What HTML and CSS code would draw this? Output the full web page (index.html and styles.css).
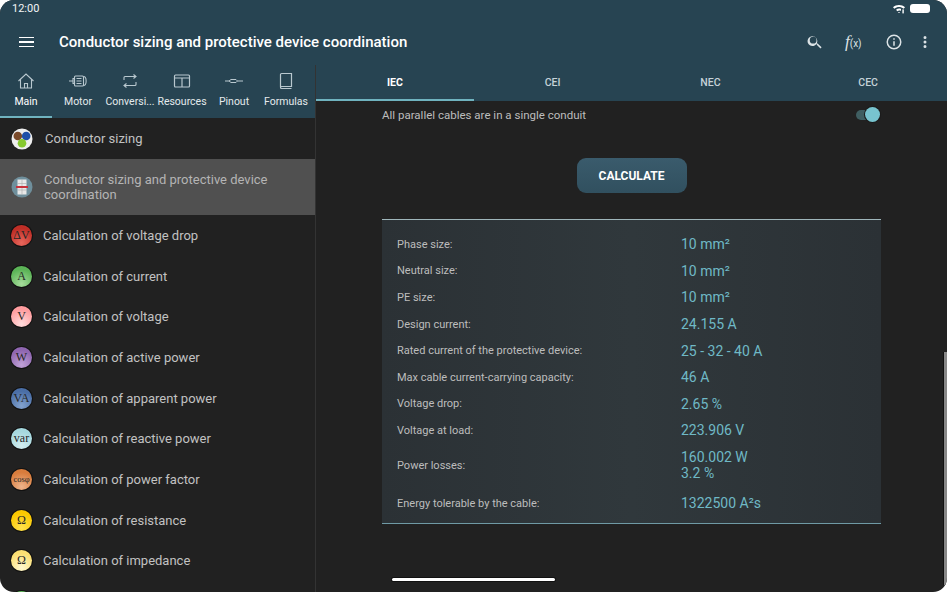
FILE: index.html
```html
<!DOCTYPE html>
<html lang="en">
<head>
    <meta charset="UTF-8">
    <meta name="viewport" content="width=device-width, initial-scale=1.0">
    <title>Conductor sizing and protective device coordination</title>
    <link rel="stylesheet" href="styles.css">
</head>
<body>
    <div class="screen">
        <header class="appbar">
            <div class="status-bar">
                <span class="clock">12:00</span>
                <div class="status-icons">
                    <svg class="wifi" width="12" height="10" viewBox="0 0 12 10"><path d="M0 3.2C3.2 .2 8.8 .2 12 3.2L10.6 4.8C8 2.4 4 2.4 1.4 4.8z" fill="#fff"/><path d="M3 5.8C4.6 4.4 6.6 4.2 8 4.9V6.9C6.8 6.3 5.4 6.5 4.4 7.2z" fill="#fff"/><path d="M5 8 6 9.2 7 8z" fill="#fff"/><rect x="9.4" y="5.4" width="1.4" height="4" fill="#fff"/></svg>
                    <div class="battery"></div>
                </div>
            </div>
            <div class="toolbar">
                <div class="hamburger"><span></span><span></span><span></span></div>
                <h1>Conductor sizing and protective device coordination</h1>
                <div class="actions">
                    <svg class="act-search" width="18" height="18" viewBox="0 0 24 24"><path d="M15.5 14h-.8l-.3-.3A6.5 6.5 0 1 0 14 14.400l.3.3v.8l5 5 1.500-1.500zm-6 0a4.500 4.500 0 1 1 0-9 4.500 4.500 0 0 1 0 9z" fill="#dce3e6"/></svg>
                    <div class="act-fx"><i>f</i><span>(x)</span></div>
                    <svg class="act-info" width="18" height="18" viewBox="0 0 24 24"><path d="M11 7h2v2h-2zm0 4h2v6h-2zm1-9a10 10 0 1 0 0 20 10 10 0 0 0 0-20zm0 18a8 8 0 1 1 0-16 8 8 0 0 1 0 16z" fill="#dce3e6"/></svg>
                    <svg class="act-more" width="18" height="18" viewBox="0 0 24 24"><path d="M12 8a2 2 0 1 0 0-4 2 2 0 0 0 0 4zm0 2a2 2 0 1 0 0 4 2 2 0 0 0 0-4zm0 6a2 2 0 1 0 0 4 2 2 0 0 0 0-4z" fill="#dce3e6"/></svg>
                </div>
            </div>
        </header>

        <div class="main">
            <aside class="sidebar">
                <nav class="side-tabs">
                    <div class="side-tab active">
                        <svg width="18" height="18" viewBox="0 0 18 18" fill="none" stroke="#b9c8cf" stroke-width="1.100"><path d="M1.500 9 9 2l7.500 7M3.500 7.500V16h11V7.500M7.500 16v-4.500h3V16"/></svg>
                        <span>Main</span>
                    </div>
                    <div class="side-tab">
                        <svg width="20" height="18" viewBox="0 0 20 18" fill="none" stroke="#b9c8cf" stroke-width="1.100"><path d="M1 9h4M5 6.500h1.500v5H5z"/><rect x="6.500" y="4" width="9" height="10" rx="1"/><path d="M8.500 6.500h5M8.500 9h5M8.500 11.500h5"/><path d="M15.500 4.500c3.500 0 3.500 9 0 9"/></svg>
                        <span>Motor</span>
                    </div>
                    <div class="side-tab">
                        <svg width="18" height="18" viewBox="0 0 18 18" fill="none" stroke="#b9c8cf" stroke-width="1.100"><path d="M3 8V5.500C3 5 3.500 4.500 4 4.500h10.500M12.500 2.500l2.500 2-2.500 2M15 10v2.500c0 .5-.5 1-1 1H3.500M5.500 11.500l-2.500 2 2.500 2"/></svg>
                        <span>Conversi...</span>
                    </div>
                    <div class="side-tab">
                        <svg width="18" height="18" viewBox="0 0 18 18" fill="none" stroke="#b9c8cf" stroke-width="1.200"><rect x="1.500" y="3" width="15" height="12" rx="1"/><path d="M1.500 6h15M9 6v9"/></svg>
                        <span>Resources</span>
                    </div>
                    <div class="side-tab">
                        <svg width="20" height="18" viewBox="0 0 20 18" fill="none" stroke="#b9c8cf" stroke-width="1"><path d="M1 9h4l2-1.500h5l1.500 1.500-1.500 1.500H7L5 9M13.500 9H19"/></svg>
                        <span>Pinout</span>
                    </div>
                    <div class="side-tab">
                        <svg width="18" height="18" viewBox="0 0 18 18" fill="none" stroke="#b9c8cf" stroke-width="1.200"><path d="M3.500 15V2.500C3.500 2 4 1.500 4.500 1.500h10v13h-10c-.6 0-1 .4-1 1s.4 1 1 1h10"/></svg>
                        <span>Formulas</span>
                    </div>
                </nav>

                <ul class="calc-list">
                    <li class="calc-item">
                        <svg class="calc-svg" width="22" height="22" viewBox="0 0 22 22"><circle cx="11" cy="11" r="10.500" fill="#eee"/><circle cx="6.800" cy="8" r="4.300" fill="#7a4a2a"/><circle cx="15.200" cy="8" r="4.300" fill="#1f4fa8"/><circle cx="11" cy="15.200" r="4.300" fill="#86c92e"/></svg>
                        <span>Conductor sizing</span>
                    </li>
                    <li class="calc-item selected">
                        <svg class="calc-svg" width="22" height="22" viewBox="0 0 22 22"><circle cx="11" cy="11" r="10.500" fill="#6f8f9c"/><rect x="6.500" y="3.500" width="9" height="15" fill="#e8e8e8"/><path d="M11 3.500v15M6.500 7.500h9M6.500 14h9" stroke="#aaa" stroke-width=".6"/><rect x="5" y="10" width="12" height="2" fill="#c8323c"/></svg>
                        <span>Conductor sizing and protective device coordination</span>
                    </li>
                    <li class="calc-item"><div class="badge red">ΔV</div><span>Calculation of voltage drop</span></li>
                    <li class="calc-item"><div class="badge green">A</div><span>Calculation of current</span></li>
                    <li class="calc-item"><div class="badge pink">V</div><span>Calculation of voltage</span></li>
                    <li class="calc-item"><div class="badge purple">W</div><span>Calculation of active power</span></li>
                    <li class="calc-item"><div class="badge blue">VA</div><span>Calculation of apparent power</span></li>
                    <li class="calc-item"><div class="badge aqua">var</div><span>Calculation of reactive power</span></li>
                    <li class="calc-item"><div class="badge orange tiny">cosφ</div><span>Calculation of power factor</span></li>
                    <li class="calc-item"><div class="badge yellow">Ω</div><span>Calculation of resistance</span></li>
                    <li class="calc-item"><div class="badge cream">Ω</div><span>Calculation of impedance</span></li>
                    <li class="calc-item"><div class="badge green"></div><span></span></li>
                </ul>
            </aside>

            <section class="content">
                <nav class="std-tabs">
                    <div class="std-tab active">IEC</div>
                    <div class="std-tab">CEI</div>
                    <div class="std-tab">NEC</div>
                    <div class="std-tab">CEC</div>
                </nav>

                <div class="form">
                    <div class="switch-row">
                        <span>All parallel cables are in a single conduit</span>
                        <div class="switch"><div class="knob"></div></div>
                    </div>

                    <button class="calc-btn">CALCULATE</button>

                    <div class="results">
                        <div class="result"><span class="label">Phase size:</span><span class="value">10 mm²</span></div>
                        <div class="result"><span class="label">Neutral size:</span><span class="value">10 mm²</span></div>
                        <div class="result"><span class="label">PE size:</span><span class="value">10 mm²</span></div>
                        <div class="result"><span class="label">Design current:</span><span class="value">24.155 A</span></div>
                        <div class="result"><span class="label">Rated current of the protective device:</span><span class="value">25 - 32 - 40 A</span></div>
                        <div class="result"><span class="label">Max cable current-carrying capacity:</span><span class="value">46 A</span></div>
                        <div class="result"><span class="label">Voltage drop:</span><span class="value">2.65 %</span></div>
                        <div class="result"><span class="label">Voltage at load:</span><span class="value">223.906 V</span></div>
                        <div class="result double"><span class="label">Power losses:</span><span class="value">160.002 W<br>3.2 %</span></div>
                        <div class="result"><span class="label">Energy tolerable by the cable:</span><span class="value">1322500 A²s</span></div>
                    </div>
                </div>

                <div class="scrollbar"></div>
            </section>
        </div>

        <div class="home-bar"></div>
    </div>
</body>
</html>
```

FILE: styles.css
```css
html {
    background-color: #fff;
}

body {
    margin: 0;
    font-family: Roboto, "Liberation Sans", sans-serif;
}

.screen {
    position: relative;
    display: flex;
    flex-direction: column;
    height: 100vh;
    background-color: #212121;
    border-radius: 14px;
    overflow: hidden;
}

.appbar {
    background-color: #274452;
    color: #fff;
    height: 65px;
    flex-shrink: 0;
}

.status-bar {
    display: flex;
    align-items: center;
    justify-content: space-between;
    height: 20px;
    padding: 0 17px 3px 12px;
    box-sizing: border-box;
}

.clock {
    font-size: 11px;
    color: #f2f5f6;
}

.status-icons {
    display: flex;
    align-items: center;
    gap: 5px;
}

.battery {
    width: 20px;
    height: 9px;
    background-color: #fff;
    border-radius: 3px;
}

.toolbar {
    display: flex;
    align-items: center;
    height: 44px;
}

.hamburger {
    display: flex;
    flex-direction: column;
    gap: 3px;
    width: 15px;
    margin-left: 19px;
}

.hamburger span {
    height: 1.500px;
    background-color: #fff;
}

.toolbar h1 {
    margin: 0 0 0 25px;
    font-size: 15px;
    font-weight: 500;
    color: #fff;
}

.actions {
    display: flex;
    align-items: center;
    margin-left: auto;
    margin-right: 13px;
}

.act-fx {
    width: 20px;
    margin-left: 21px;
    color: #dce3e6;
    white-space: nowrap;
}

.act-fx i {
    font-family: "Liberation Serif", serif;
    font-size: 17px;
}

.act-fx span {
    font-size: 10px;
}

.act-info {
    margin-left: 20px;
}

.act-more {
    margin-left: 13px;
}

.main {
    display: flex;
    flex: 1;
    min-height: 0;
}

.sidebar {
    width: 315px;
    flex-shrink: 0;
    border-right: 1px solid #333;
    display: flex;
    flex-direction: column;
}

.side-tabs {
    display: flex;
    height: 53px;
    background-color: #274452;
    flex-shrink: 0;
}

.side-tab {
    width: 52px;
    display: flex;
    flex-direction: column;
    align-items: center;
    padding-top: 7px;
    box-sizing: border-box;
    gap: 5px;
    font-size: 10.500px;
    color: #e4eaec;
    white-space: nowrap;
    border-bottom: 2px solid transparent;
}

.side-tab svg {
    display: block;
}

.side-tab.active {
    color: #fff;
    border-bottom-color: #6fb3bf;
}

.calc-list {
    list-style: none;
    margin: 0;
    padding: 0;
    overflow: hidden;
}

.calc-item {
    display: flex;
    align-items: center;
    gap: 11px;
    padding-left: 11px;
    height: 40.700px;
    font-size: 13px;
    line-height: 15px;
    color: #c2c2c2;
}

.calc-item:first-child {
    height: 41px;
    gap: 12px;
}

.calc-item.selected {
    height: 56px;
    background-color: #505050;
    color: #b4b4b4;
}

.calc-svg {
    flex-shrink: 0;
}

.badge {
    width: 21px;
    height: 21px;
    flex-shrink: 0;
    border-radius: 50%;
    display: flex;
    align-items: center;
    justify-content: center;
    overflow: hidden;
    font-family: "Liberation Serif", serif;
    font-size: 12px;
    color: #262626;
    box-shadow: 0 0 0 1px #111;
    white-space: nowrap;
}

.badge.tiny {
    font-size: 8.500px;
}

.red { background: radial-gradient(circle at 50% 85%, #e8675c, #bf2e26 70%); }
.green { background: radial-gradient(circle at 50% 85%, #a7dc9c, #5bb356 70%); }
.pink { background: radial-gradient(circle at 50% 85%, #ffdcdc, #ff9d9f 70%); }
.purple { background: radial-gradient(circle at 50% 85%, #c1a2d8, #8f66b0 70%); }
.blue { background: radial-gradient(circle at 50% 85%, #83a3cf, #4a6ea6 70%); }
.aqua { background: radial-gradient(circle at 50% 85%, #d3edf0, #a5d8de 70%); }
.orange { background: radial-gradient(circle at 50% 85%, #eeb48c, #d87c3c 70%); }
.yellow { background: radial-gradient(circle at 50% 85%, #ffe24d, #fac800 70%); }
.cream { background: radial-gradient(circle at 50% 85%, #fff8d0, #fbdf72 70%); }

.content {
    position: relative;
    flex: 1;
    min-width: 0;
}

.std-tabs {
    display: flex;
    height: 36px;
    background-color: #274452;
}

.std-tab {
    flex: 1;
    display: flex;
    align-items: center;
    justify-content: center;
    padding-bottom: 0;
    font-size: 10.500px;
    font-weight: 500;
    color: #c5d2d8;
    box-sizing: border-box;
    border-bottom: 2px solid transparent;
}

.std-tab.active {
    color: #fff;
    font-weight: 700;
    border-bottom-color: #6fb3bf;
}

.form {
    display: flex;
    flex-direction: column;
    align-items: center;
    padding: 0 66px;
}

.switch-row {
    align-self: stretch;
    display: flex;
    align-items: center;
    justify-content: space-between;
    height: 27px;
    padding-right: 3px;
    font-size: 11.500px;
    color: #bdbdbd;
}

.switch {
    position: relative;
    width: 22px;
    height: 10px;
    border-radius: 5px;
    background-color: #3f5e61;
}

.knob {
    position: absolute;
    top: -3px;
    right: -2px;
    width: 15px;
    height: 15px;
    border-radius: 50%;
    background-color: #78c4cf;
    box-shadow: 0 0 0 1px #1a1a1a;
}

.calc-btn {
    margin-top: 30px;
    width: 110px;
    height: 35px;
    border: none;
    border-radius: 9px;
    background: linear-gradient(180deg, #3a5b6c, #31505f);
    color: #fff;
    font-family: inherit;
    font-size: 12px;
    font-weight: 700;
}

.results {
    align-self: stretch;
    margin-top: 26px;
    height: 305px;
    box-sizing: border-box;
    padding: 11px 15px 0;
    border-top: 1px solid #9fb6bb;
    border-bottom: 1px solid #6f9aa5;
    background: linear-gradient(90deg, #2b3135, #30383c 50%, #2b3135);
}

.result {
    display: flex;
    align-items: center;
    height: 26.600px;
}

.result.double {
    height: 43px;
    margin-bottom: 3px;
}

.label {
    width: 284px;
    flex-shrink: 0;
    font-size: 11px;
    color: #bdbdbd;
}

.value {
    font-size: 14px;
    line-height: 16px;
    color: #6fb9c6;
}

.scrollbar {
    position: absolute;
    top: 287px;
    right: 0;
    bottom: 7px;
    width: 3px;
    background-color: #888;
    box-shadow: -1px 0 0 #111;
}

.home-bar {
    position: absolute;
    left: 392px;
    top: 578px;
    width: 163px;
    height: 3px;
    border-radius: 2px;
    background-color: #fff;
    box-shadow: 0 0 0 1px #111;
}
```
